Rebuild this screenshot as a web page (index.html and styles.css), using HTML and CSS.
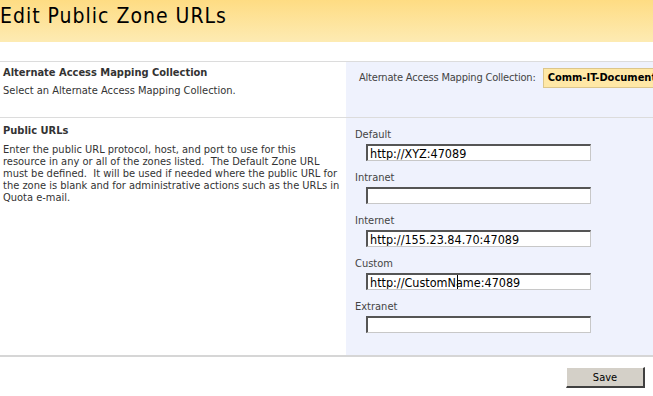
FILE: index.html
```html
<html lang="en">
  <head>
    <meta charset="UTF-8" />
    <title>Edit Public Zone URLs</title>
    <link rel="stylesheet" href="styles.css">
  </head>
  <body>
    <div class="title_bar">
      <h1>Edit Public Zone URLs</h1>
    </div>

    <div class="form_table">
      <div class="desc_cell first_row">
        <h3>Alternate Access Mapping Collection</h3>
        <p>Select an Alternate Access Mapping Collection.</p>
      </div>
      <div class="ctrl_cell collection_cell">
        <span class="collection_label">Alternate Access Mapping Collection:</span>
        <span class="collection_box">Comm-IT-Document Center</span>
      </div>

      <div class="desc_cell">
        <h3>Public URLs</h3>
        <p>Enter the public URL protocol, host, and port to use for this<br>
          resource in any or all of the zones listed.&nbsp; The Default Zone URL<br>
          must be defined.&nbsp; It will be used if needed where the public URL for<br>
          the zone is blank and for administrative actions such as the URLs in<br>
          Quota e-mail.</p>
      </div>
      <div class="ctrl_cell zones">
        <label>Default</label>
        <div class="field"><input type="text" value="http://XYZ:47089" /></div>
        <label>Intranet</label>
        <div class="field"><input type="text" value="" /></div>
        <label>Internet</label>
        <div class="field"><input type="text" value="http://155.23.84.70:47089" /></div>
        <label>Custom</label>
        <div class="field"><input type="text" value="http://CustomName:47089" /><span class="caret"></span></div>
        <label>Extranet</label>
        <div class="field"><input type="text" value="" /></div>
      </div>
    </div>

    <div class="button_row">
      <button id="save_btn">Save</button>
    </div>
  </body>
</html>
```

FILE: styles.css
```css
body {
  margin: 0;
  font-family: Tahoma, "DejaVu Sans Condensed", "DejaVu Sans", sans-serif;
  font-size: 11px;
  color: #000;
  background: #fff;
  overflow: hidden;
}

.title_bar {
  height: 42px;
  background: linear-gradient(#fedc83, #fdebb3);
  margin-bottom: 19px;
}

.title_bar h1 {
  margin: 0;
  padding-top: 3px;
  font-weight: normal;
  font-size: 21px;
  line-height: 26px;
  letter-spacing: 1px;
}

.form_table {
  display: grid;
  grid-template-columns: 346px 1fr;
  border-bottom: 2px solid #d6d6d6;
}

.desc_cell,
.ctrl_cell {
  border-top: 1px solid #dcdcdc;
}

.desc_cell {
  padding: 6px 3px 0 3px;
}

.desc_cell.first_row {
  padding-top: 4px;
}

.desc_cell h3 {
  margin: 0;
  font-size: 11px;
  line-height: 14px;
  color: #333;
}

.desc_cell p {
  margin: 6px 0 0 0;
  line-height: 12px;
  color: #333;
  white-space: nowrap;
}

.first_row p {
  margin-top: 5px;
}

.ctrl_cell {
  background: #eff2fd;
  color: #444;
}

.collection_cell {
  height: 49px;
  padding: 6px 0 0 13px;
  white-space: nowrap;
  overflow: hidden;
}

.collection_label {
  letter-spacing: -0.2px;
}

.collection_box {
  display: inline-block;
  margin-left: 4px;
  padding: 3px 4px;
  background: #ffe8a6;
  border: 1px solid #dcc68b;
  color: #000;
  font-weight: bold;
  line-height: 12px;
}

.zones {
  display: flex;
  flex-direction: column;
  align-items: flex-start;
  padding: 10px 0 22px 9px;
}

.zones label {
  line-height: 14px;
  margin-bottom: 2px;
}

.field {
  position: relative;
  margin: 0 0 10px 11px;
}

.field:last-child {
  margin-bottom: 0;
}

.field input {
  display: block;
  width: 225px;
  height: 17px;
  margin: 0;
  padding: 0 2px;
  box-sizing: border-box;
  font-family: Tahoma, "DejaVu Sans Condensed", "DejaVu Sans", sans-serif;
  font-size: 12.5px;
  color: #000;
  background: #fff;
  border-style: solid;
  border-width: 2px 1px 1px 2px;
  border-color: #555 #c8c8c8 #c8c8c8 #555;
  outline: none;
}

.caret {
  position: absolute;
  left: 91px;
  top: 2px;
  width: 1px;
  height: 14px;
  background: #000;
}

.button_row {
  display: flex;
  justify-content: flex-end;
  padding: 10px 8px 0 0;
}

#save_btn {
  width: 79px;
  height: 21px;
  font-family: Tahoma, "DejaVu Sans Condensed", "DejaVu Sans", sans-serif;
  font-size: 11px;
  color: #000;
  background: #d4d0c8;
  border-style: solid;
  border-width: 1px 2px 2px 1px;
  border-color: #fff #404040 #404040 #fff;
  padding: 0;
}
```
